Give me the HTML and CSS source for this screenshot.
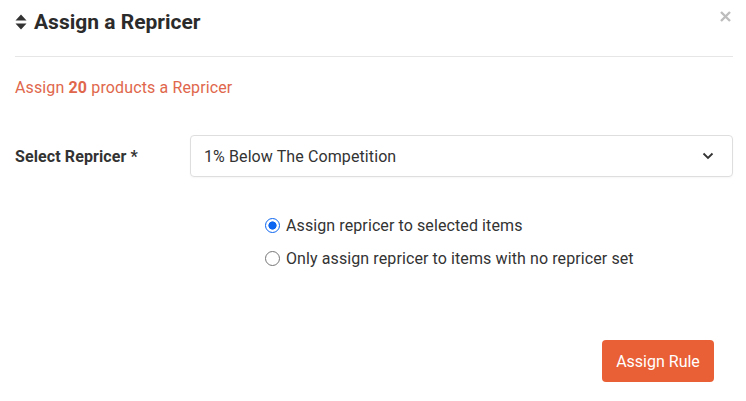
FILE: index.html
```html
<!DOCTYPE html>
<html>
<head>
<meta charset="utf-8">
<link rel="stylesheet" href="styles.css">
</head>
<body>
<div class="modal">
  <div class="header">
    <h1 class="title">
      <svg class="sort" width="12" height="16" viewBox="0 0 12 16"><path d="M6 0.5 L11.5 6.5 L0.5 6.5 Z M6 15.5 L11.5 9.5 L0.5 9.5 Z" fill="#333"/></svg>
      Assign a Repricer
    </h1>
    <svg class="close" width="11" height="11" viewBox="0 0 11 11"><path d="M1 1 L10 10 M10 1 L1 10" stroke="#bdbdbd" stroke-width="2.4" stroke-linecap="butt"/></svg>
  </div>
  <p class="info">Assign <b>20</b> products a Repricer</p>
  <div class="row">
    <label class="label">Select Repricer *</label>
    <div class="select">
      <span>1% Below The Competition</span>
      <svg width="12" height="8" viewBox="0 0 12 8"><path d="M1.5 1.5 L6 6 L10.5 1.5" fill="none" stroke="#333" stroke-width="1.8"/></svg>
    </div>
  </div>
  <div class="radios">
    <label class="radio"><span class="dot checked"></span>Assign repricer to selected items</label>
    <label class="radio"><span class="dot"></span>Only assign repricer to items with no repricer set</label>
  </div>
  <div class="footer">
    <button class="btn">Assign Rule</button>
  </div>
</div>
</body>
</html>
```
FILE: styles.css
```css
* { box-sizing: border-box; }
body { margin: 0; background: #fff; font-family: Roboto, "Noto Sans", sans-serif; color: #333; }
.modal { padding: 0 13px 0 15px; width: 746px; }
.header { display: flex; justify-content: space-between; align-items: flex-start; height: 57px; border-bottom: 1px solid #e6e6e6; }
.title { margin: 10px 0 0 0; font-size: 21px; font-weight: 700; color: #2b2b2b; display: flex; align-items: center; gap: 7px; line-height: 24px; }
.sort { display: block; }
.close { display: block; margin: 11px 2px 0 0; }
.info { margin: 21px 0 0 0; font-size: 16px; line-height: 19px; color: #e0674c; letter-spacing: 0.13px; }
.info b { font-weight: 700; }
.row { display: flex; align-items: center; margin-top: 38px; }
.label { width: 175px; font-size: 16px; font-weight: 700; color: #333; letter-spacing: 0.1px; }
.select { flex: 1; height: 42px; border: 1px solid #dedede; border-radius: 4px; display: flex; align-items: center; justify-content: space-between; padding: 0 18px 0 13px; font-size: 16px; color: #333; letter-spacing: 0.1px; box-shadow: 0 1px 2px rgba(0,0,0,0.04); }
.radios { margin-top: 39px; padding-left: 250px; display: flex; flex-direction: column; gap: 14px; }
.radio { display: flex; align-items: center; font-size: 16px; color: #333; line-height: 19px; letter-spacing: 0.1px; }
.dot { width: 15px; height: 15px; border-radius: 50%; border: 1px solid #767676; margin-right: 6px; flex: none; }
.dot.checked { border: 1.5px solid #0b65f0; background: radial-gradient(circle, #0b65f0 0 3.8px, #fff 4.4px); }
.footer { display: flex; justify-content: flex-end; margin-top: 72px; padding-right: 19px; }
.btn { background: #ea6036; color: #fff; border: none; border-radius: 4px; height: 42px; width: 112px; font-family: Roboto, sans-serif; font-size: 16px; }
```
